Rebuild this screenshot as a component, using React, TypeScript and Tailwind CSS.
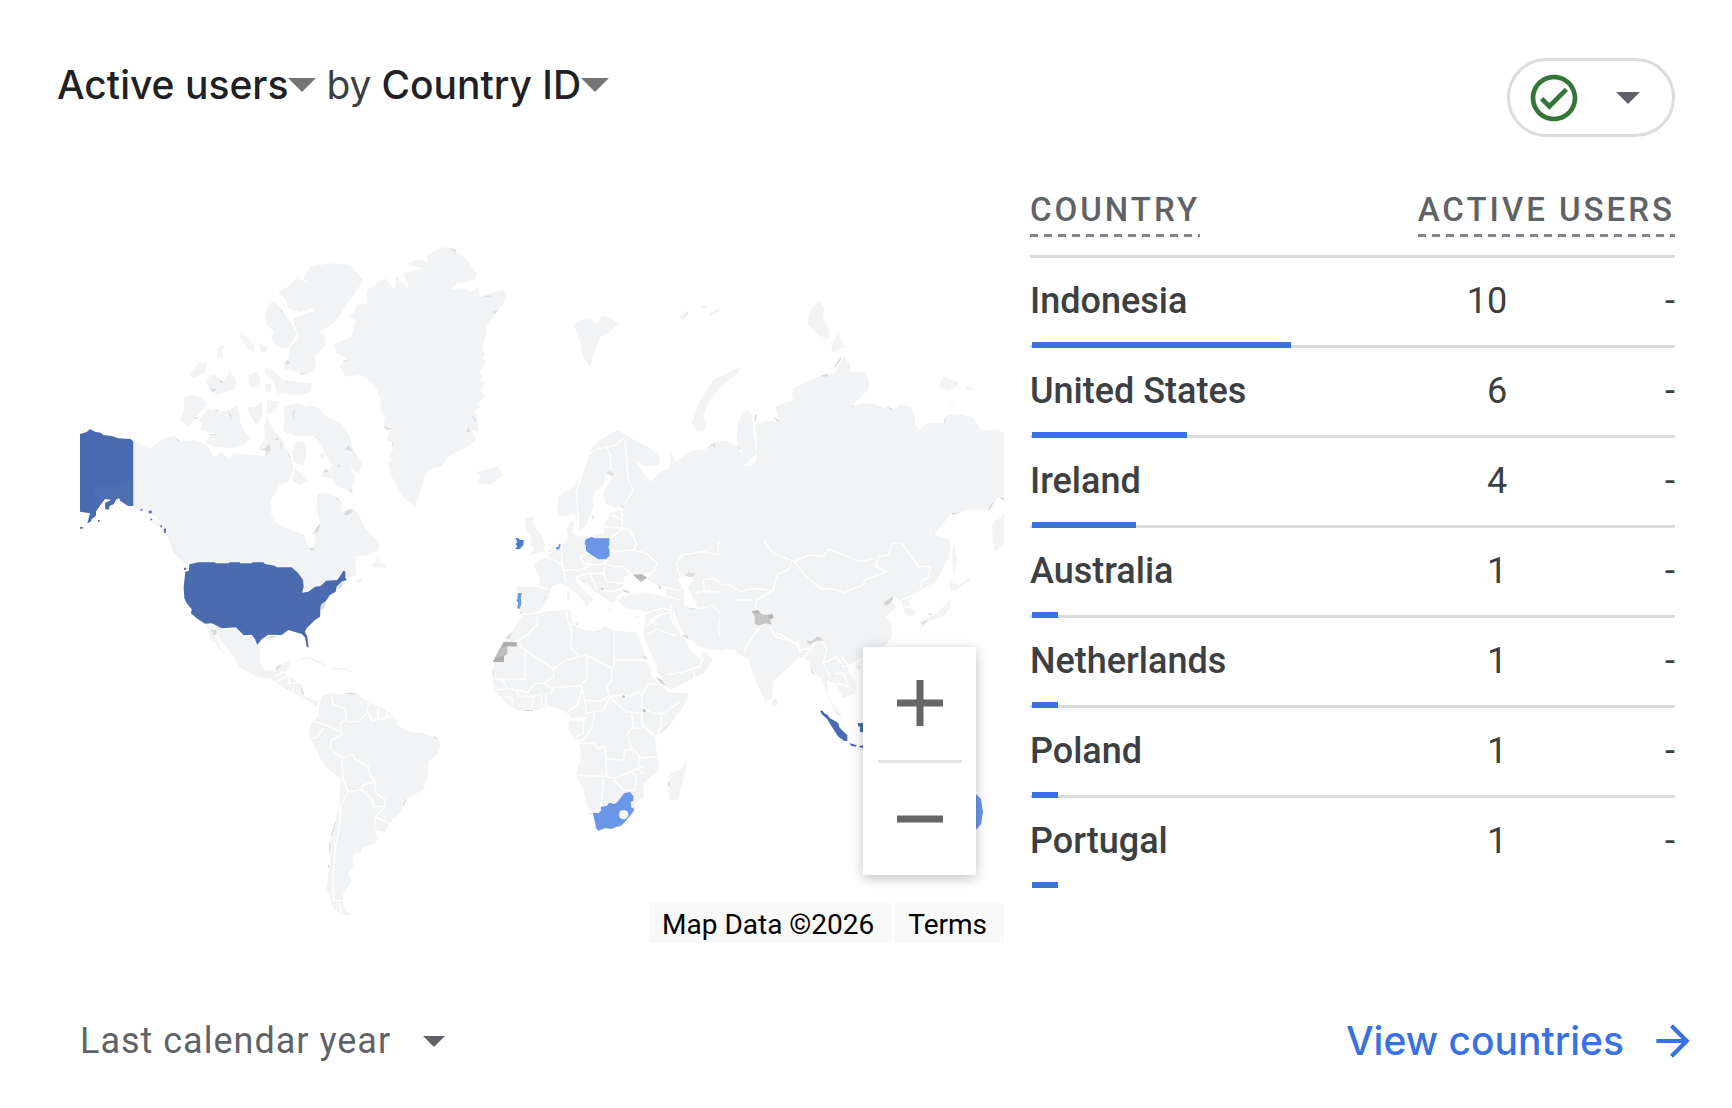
import React from "react";

const rows = [
  { country: "Indonesia", users: 10 },
  { country: "United States", users: 6 },
  { country: "Ireland", users: 4 },
  { country: "Australia", users: 1 },
  { country: "Netherlands", users: 1 },
  { country: "Poland", users: 1 },
  { country: "Portugal", users: 1 },
];

function Caret({ className }: { className: string }) {
  return (
    <svg viewBox="0 0 20 10" className={className} aria-hidden="true">
      <path d="M0 0H20L10 10Z" fill="currentColor" />
    </svg>
  );
}

const land = "#f1f3f4";

function WorldMap() {
  return (
    <svg viewBox="80 187 924 756" className="block w-full" role="img" aria-label="Active users by country">
      {/* North America */}
      <g transform="translate(70 230) scale(.33333)" fill={land}>
        <path d="M1072 75L1100 60 1125 50 1160 65 1190 90 1220 130 1215 150 1160 160 1142 178 1175 175 1210 185 1225 168 1230 202 1250 195 1275 185 1300 180 1313 198 1300 220 1285 240 1258 272 1272 262 1250 290 1245 330 1235 360 1248 375 1238 385 1248 395 1230 425 1240 440 1230 450 1245 460 1230 480 1245 500 1215 525 1232 530 1215 545 1222 560 1225 605 1205 600 1218 630 1185 655 1150 670 1130 685 1115 710 1085 715 1065 730 1055 770 1045 800 1038 830 1020 815 1005 808 985 775 965 740 955 700 965 685 955 680 968 660 975 635 950 632 955 610 970 600 940 585 945 560 932 540 935 525 925 490 910 460 870 435 825 440 808 405 840 390 800 370 790 345 845 320 855 270 840 262 862 225 890 222 890 180 945 145 975 178 978 140 1018 178 1000 130 1065 115 1010 105 1030 92 1060 90 1072 100Z" />
        <path d="M720 110L780 100 840 105 882 152 860 180 840 210 810 255 790 280 750 305 768 320 765 345 735 380 738 410 715 432 640 415 655 385 660 350 690 320 680 300 668 265 730 243 732 233 690 247 655 235 645 205 625 185 650 172 680 145 718 160 700 145Z" />
        <path d="M610 212L632 235 660 275 680 310 665 335 650 355 620 350 605 325 612 305 590 285 585 255 595 225ZM505 310L530 320 550 345 555 370 530 355ZM565 340L590 350 588 370 575 365ZM413 395L405 425 375 445 358 435 385 400ZM405 450L430 432 460 455 480 422 498 450 495 475 445 495 420 482ZM535 435L560 425 570 440 568 475 540 470ZM585 410L620 430 640 450 680 455 725 460 720 490 680 495 620 488 612 450 585 430ZM585 462L605 462 602 488 588 482ZM445 352L465 345 455 360 460 380 440 385Z" />
        <path d="M340 500L370 495 395 505 413 525 380 560 355 590 332 570 342 535ZM415 538L450 545 478 540 500 525 510 570 520 600 540 625 520 645 480 655 430 650 405 635 430 610 390 600 398 585 385 570ZM530 530L555 530 575 515 578 560 560 585 545 565ZM590 510L628 515 615 545 592 550Z" />
        <path d="M640 530L680 520 710 530 720 525 745 535 770 560 810 580 840 620 850 660 880 700 865 730 840 710 855 740 845 790 800 765 790 745 750 740 790 705 770 680 750 640 735 615 690 620 640 605 645 560ZM675 635L705 635 710 680 700 705 675 700 665 670ZM675 715L715 755 690 765 665 750ZM752 668L765 672 760 688 750 682Z" />
        <path d="M192 635L215 640 240 655 280 625 310 618 330 635 375 630 410 645 430 680 455 670 480 690 490 670 550 675 585 680 590 655 565 655 585 625 583 585 592 560 610 600 635 625 650 660 665 690 670 720 655 755 630 765 600 815 605 860 620 880 660 900 705 915 710 940 725 965 735 940 733 905 750 880 740 840 742 790 780 790 815 815 815 845 850 835 870 860 885 895 930 940 925 960 900 975 858 978 855 1000 860 1035 828 1048 822 1022 800 1050 768 1052 735 1070 697 1090 700 1050 665 1015 620 1008 580 1000 358 1000 345 1000 310 970 300 930 285 910 260 860 240 850 192 828Z" />
        <path d="M905 1010L925 980 930 1000 950 1000 950 1015ZM850 1058L882 1040 870 1056Z" />
        <path d="M1213 715L1225 725 1250 718 1285 710 1300 735 1260 765 1225 760 1230 738Z" />
        <path fill="#4a6baf" d="M30 612L50 606 60 597 75 605 92 608 100 615 125 618 145 625 182 627 190 635 190 828 172 827 150 812 147 805 140 808 132 822 118 828 118 838 106 838 106 818 124 810 105 808 92 825 78 845 78 857 65 868 62 875 52 880 60 850 30 845ZM236 842h9v8h-9ZM281 896h7v12h-7ZM211 837h6v6h-6ZM84 870h5v5h-5ZM30 891h8v5h-8ZM241 866h5v5h-5ZM270 886h6v6h-6Z" />
        <path fill="#4d6eb1" d="M72 768L100 764 138 772 142 758 160 765 175 750 189 755 189 827 172 826 150 811 147 805 140 807 105 807 85 830 75 800Z" />
        <path fill="#fff" d="M78 845L92 825 105 808 124 810 106 818 106 838 118 838 118 828 132 822 140 808 147 805 150 812 172 827 172 850 78 850Z" />
        <path fill="#4a6baf" d="M106 818L124 810 132 822 118 828 118 838 106 838Z" />
        <path fill="none" stroke="#dfe2e4" strokeWidth="2" d="M192 829l25 14 20 18 25 15 22 30M240 870l25 15M300 935l20 32 25 20" />
        <path fill="#dadcdd" d="M650 388L660 400 645 405ZM688 429L710 430 695 434ZM420 478L442 477 428 486ZM474 545L484 555 484 574ZM310 616L330 632 324 634ZM598 640L602 660 586 682 588 662 564 657 585 655ZM615 630L622 620 628 630ZM652 662L663 682 658 682ZM632 640h4v20h-4ZM835 645L848 664 826 660ZM758 728L770 715 774 726ZM822 852L832 840 850 837 845 848 830 857ZM728 913L745 885 752 882 745 905ZM715 955L728 953 735 957 725 964ZM940 588L968 598 950 601ZM967 635L972 640 967 656ZM1130 52L1158 60 1158 67ZM1240 200L1260 195 1266 199 1246 202ZM1268 245L1288 240 1275 251ZM1188 608L1196 590 1200 605ZM1202 553L1220 572 1215 575ZM815 394L840 387 838 391 822 397ZM627 232L640 246 636 248ZM834 776L848 782 846 790ZM670 540L674 535 672 568 667 552ZM802 704h8v6h-8ZM375 565L388 558 380 568ZM417 613h22v3h-22ZM446 447L460 457 455 460ZM733 612L742 628 737 624ZM430 539L452 542 440 544ZM796 800L808 808 803 811Z" />
      </g>
      {/* United States, Mexico, Central America and the Caribbean */}
      <g transform="translate(70 400) scale(.33333)" fill={land}>
        <path d="M408 674L425 674 455 687 497 685 522 706 545 706 555 720 563 737 572 740 568 780 580 810 612 812 625 795 660 785 655 810 640 820 690 850 697 855 703 888 745 905 740 920 715 902 690 888 640 860 600 835 565 832 505 800 495 775 470 745 440 700 430 700 465 765 440 735 420 715Z" />
        <path fill="none" stroke={land} strokeWidth="5" d="M680 780L715 772 745 785 765 797M785 805L820 808 845 814" />
        <path fill="none" stroke="#fff" strokeWidth="4" d="M615 830L640 815M645 850L690 848M620 845L655 825 660 860M672 855L668 875" />
        <path fill="#4a6baf" d="M358 493L385 487 432 487 440 490 475 490 480 487 508 487 512 490 545 490 548 487 580 487 585 492 615 497 620 502 665 502 685 520 699 540 701 560 696 578 715 575 735 560 752 558 768 542 802 540 812 525 820 512 826 514 826 532 830 540 815 545 800 560 797 575 780 585 770 600 765 605 752 618 750 650 735 660 710 685 705 695 712 710 716 743 710 740 705 712 695 702 655 690 635 705 595 704 575 718 562 735 555 718 545 704 522 706 497 682 455 685 425 670 405 671 380 655 363 640 365 628 350 610 343 595 341 560 346 515 357 512ZM342 503h7v6h-7Z" />
        <path fill="#d9d9d9" d="M800 572L808 555 824 545 815 560ZM752 630L754 612 770 602 762 625ZM590 713L605 707 622 709 600 716ZM422 690L438 690 440 705 430 705ZM615 808L628 796 634 796 622 810ZM694 865L704 885 696 882ZM640 858L655 865 652 868Z" />
      </g>
      {/* South America */}
      <g transform="translate(290 680) scale(.33333)">
        <path fill={land} d="M100 45L130 38 150 42 200 42 240 70 290 90 320 120 320 135 360 155 400 160 440 175 453 195 440 225 415 245 413 290 400 330 350 355 335 395 300 425 285 455 255 450 262 475 255 492 215 500 213 520 190 522 190 560 175 580 185 605 160 640 158 665 165 690 185 705 155 705 130 685 120 650 108 625 115 580 120 540 118 490 135 430 148 370 152 295 110 265 90 235 75 200 55 170 62 130 85 110 90 70Z" />
        <path fill="none" stroke="#fff" strokeWidth="5" strokeLinejoin="round" d="M125 50L130 75 165 85 170 120 150 130 155 165 125 180 120 200 135 220 160 235 190 222 195 238 235 260 240 285 255 305 220 315 215 330 175 335 160 300 155 240M70 125L100 132 130 145 150 155M100 145L80 172 60 175M170 125L205 125 230 100 235 70M235 95L245 122 305 110M265 85L262 115M290 88L290 112M255 305L255 335 285 360 285 380 250 380 250 360 215 330M285 380L257 410 252 450M257 410L295 430M175 335L150 380 150 430 137 500 130 580 130 662 158 662M148 670L155 705" />
        <path fill="none" stroke="#d6d6d6" strokeWidth="3" d="M165 41h32M430 170l12 6M340 378l8 -20M136 428l-12 40M119 490v25M116 555v8" />
      </g>
      {/* Europe and western Asia */}
      <g transform="translate(480 400) scale(.33333)">
        <path fill={land} d="M232 345L235 290 285 255 305 220 320 180 340 135 360 120 385 105 415 90 450 112 510 145 540 170 538 195 500 200 468 185 490 215 510 245 545 215 570 205 572 155 585 185 640 150 680 150 710 125 740 122 765 135 790 165 770 120 775 60 800 28 815 45 820 100 830 160 800 190 790 195 815 200 835 170 828 80 850 65 900 60 900 780 800 775 760 750 690 750 650 735 625 715 600 700 585 740 585 780 520 780 490 705 495 670 500 640 490 632 440 625 415 605 425 590 450 585 500 580 560 590 560 570 540 560 515 547 500 535 530 510 505 520 480 530 455 520 435 530 428 550 430 575 405 590 410 600 395 610 370 590 345 575 305 540 285 530 290 545 320 580 345 600 330 605 320 620 300 590 265 560 245 550 215 560 205 590 185 630 150 640 125 635 110 625 108 590 110 560 175 560 180 530 160 495 175 480 205 465 240 440 265 415 260 385 275 360 285 375 275 400 300 410 340 405 370 400 375 370 390 340 440 325 400 322 375 310 370 280 385 250 400 225 375 225 370 255 340 280 340 320 320 375 295 395 285 340 250 350ZM135 355L160 350 160 375 180 400 195 435 190 455 145 468 165 445 150 435 155 410 140 395ZM262 575L270 575 268 600 260 600ZM375 625L395 628 390 633ZM465 645L480 650 468 655Z" />
        <path fill="#fff" d="M593 538L615 522 645 535 625 560 637 590 655 625 640 628 612 615 612 570Z" />
        <path fill="none" stroke="#fff" strokeWidth="5" strokeLinejoin="round" d="M295 385L290 270 310 210 325 165 350 148 380 140 400 140 430 118M380 140L390 165 395 210M435 120L445 240 460 270 435 310M395 345L425 360M425 325L428 385M372 380L430 385M390 415L430 385 450 390 470 430 460 450 390 455 375 490 400 500 430 500 450 520M460 450L500 460 530 490 520 515M245 425L245 480 250 510M300 470L330 460M300 470L310 490 355 495 375 490M250 510L300 510 340 490M175 560L205 568M195 468L250 495M250 510L258 548M290 530L330 520 370 520 380 545 430 550M330 520L350 565M365 570L400 575 430 565M375 500L370 520M545 625L575 630 570 610M500 640L545 625M540 560L600 572M560 590L600 600M580 630L585 660 610 700M650 625L700 618 722 640 715 680 720 710 740 750M720 650L760 625 820 630M715 700L770 705 800 650M600 532L590 490 605 465 670 455 715 465 715 430 750 412 790 398 830 410 860 440 900 465M672 575L670 540 700 535 750 565 790 590 830 580M672 575L720 575 770 622M645 580L690 570M770 600L830 610 850 580 900 540M500 680L545 640M520 670L590 710M130 590V620" />
        <path fill="#4b7bd1" d="M106 415L116 415 120 420 131 420 130 435 118 448 106 447 112 438 106 432 112 427Z" />
        <path fill="#6b96e8" d="M317 418L335 411 345 415 388 415 388 435 385 440 389 452 388 468 378 478 355 478 335 465 318 452 318 438 314 432ZM228 442L236 440 236 431 242 432 240 445 234 449 228 446ZM113 580L126 580 122 592 124 612 118 627 112 624 115 608 109 602 113 595Z" />
        <path fill="#b9b9b9" d="M458 524L485 523 502 533 482 545Z" />
        <path fill="#c6c6c6" d="M815 635L832 632 845 645 862 648 878 645 880 655 870 660 875 674 855 670 840 676 824 672Z" />
        <path fill="#dcdcdc" d="M380 220L388 213 402 222 398 228ZM612 528L625 517 645 520 638 532ZM428 566L450 575 450 580 432 576ZM533 556L547 562 540 570ZM672 150L700 130 708 128 704 143 698 137ZM768 130L782 148 776 148ZM668 45L677 82 670 75ZM824 42L832 45 824 68ZM605 705L622 705 626 718ZM95 697L80 718 82 708ZM195 590L200 588 188 606ZM296 535L316 546 312 549ZM422 316L434 320 428 324ZM338 345L342 348 335 362ZM205 455L225 438 210 455ZM115 633L130 638 125 642ZM880 50L898 62 890 63Z" />
        <circle cx="367" cy="567" r="4" fill="#d3d3d3" />
      </g>
      {/* Svalbard and Franz Josef Land */}
      <path fill={land} d="M574 325L582 320 590 318 596 325 602 316 612 318 618 324 610 332 600 337 595 350 590 368 583 356 580 342ZM680 316L688 310 684 320ZM700 306L708 306 704 309ZM712 312L720 308 719 312 708 317Z" />
      {/* Northern and eastern Russia */}
      <g transform="translate(680 270) scale(.33333)">
        <path fill={land} d="M228 460L245 470 300 460 285 410 340 390 335 375 340 355 380 335 420 318 465 310 490 262 510 280 512 305 555 305 568 330 565 360 510 412 545 398 580 402 640 420 660 405 695 410 705 440 705 460 718 480 740 460 790 460 800 435 850 432 880 445 905 482 950 478 972 490 972 690 955 680 930 720 880 718 815 730 790 760 760 795 785 810 800 810 808 870 240 870ZM180 290L175 310 120 350 85 400 70 440 78 480 50 482 35 460 60 390 100 330ZM418 92L432 115 428 150 450 180 445 210 415 195 382 160 392 120ZM475 188L495 230 452 248 460 215ZM780 335L790 320 835 335 830 350 800 362 778 350ZM855 345L885 355 865 362ZM972 730L972 820 945 845 935 770ZM812 400L826 408 815 410Z" />
        <path fill="#dadada" d="M462 290L482 262 484 266 465 293ZM425 315L445 312 444 319 426 320ZM614 408L638 416 636 423ZM815 730L848 725 818 735ZM925 718L936 698 941 697 930 718ZM957 680L972 685 970 692ZM278 440L298 450 296 457ZM510 412L525 403 520 410ZM10 145L25 122 22 134ZM756 795h12l-6 -5ZM793 445h4v16h-4Z" />
      </g>
      {/* Africa and Arabia */}
      <g transform="translate(470 600) scale(.33333)">
        <path fill={land} d="M160 45L200 42 235 33 300 30 305 60 310 75 345 90 385 95 400 78 435 90 500 98 505 115 520 150 540 200 545 225 570 255 595 275 625 280 658 278 640 320 600 375 555 410 560 450 568 490 560 515 520 550 522 590 495 610 493 630 460 675 420 687 385 692 368 640 350 620 340 570 318 525 335 465 325 425 295 390 298 345 280 333 260 325 235 318 190 333 145 333 105 305 75 270 68 240 72 185 100 128 130 90 145 60ZM645 488L650 500 640 540 625 598 600 600 592 560 600 520 630 510ZM525 95L540 80 580 70 620 100 640 110 660 150 690 175 705 155 730 180 700 220 640 250 600 268 590 262 570 215 545 160 525 115Z" />
        <path fill="none" stroke="#fff" strokeWidth="5" strokeLinejoin="round" d="M200 50L203 72 165 108 140 125 165 150 250 207 290 180 330 170M165 150L165 238 80 238M290 35L292 60 305 90 303 145 330 170 350 165M292 65L308 75M433 88L433 195M433 180L530 180M355 168L425 205 433 195M425 205L425 240 410 260 420 290M250 207L252 230 220 250 195 250 175 275M242 285L250 262 330 258 350 235 350 170M335 260L345 300 390 305 420 285M345 300L348 340M335 270L325 310 295 335M345 340L400 330 420 290 440 310 470 335 515 340M420 290L450 285 480 290 505 275 515 285 515 320 545 340 580 340 630 305M515 285L535 250 570 255M575 342L572 385 560 408M515 335L515 375 555 408M480 385L515 385M485 345L490 380 470 405M375 340L365 385 345 415 325 425M325 430L370 430 385 445 405 440 408 475 460 480 465 450 485 450 475 410M485 445L515 475 560 470M408 475L410 530 318 525M410 530L435 535 480 515 520 500M508 470L505 500 515 520 525 515M400 535L398 570 393 620M435 540L460 570 495 570 500 530 480 515M300 360L340 360 340 400 318 410M298 355L352 355M75 235L100 240 110 265 140 270 147 290M80 270L110 265M105 290L125 290 130 315M147 290L190 290 185 325M145 270L175 278M190 290L215 280 215 320M228 278L228 318M220 250L245 265M540 65L555 50 605 35M600 30L610 70 635 100M530 105L560 88 620 108M590 225L640 215 690 200 700 170M670 210L675 235" />
        <path fill="#bdbdbd" d="M100 127H140V139H112V163L102 168V186H69L85 152Z" />
        <path fill="#adadad" d="M100 127H140V139H112L96 143ZM76 172L102 168V186H69Z" />
        <path fill="#d6d6d6" d="M104 118L128 96 118 114ZM517 175L525 169 533 178ZM557 232L575 238 590 258 572 250ZM556 202L576 225 570 222ZM560 408L602 366 590 382ZM165 330h25v3h-25ZM637 104L652 108 656 117ZM652 26L680 25 668 29ZM594 545h5v12h-5ZM316 70L326 71 320 75ZM374 90L386 94 384 97ZM68 212h3v18h-3ZM355 635L366 645 358 643Z" />
        <circle cx="461" cy="290" r="4" fill="#bbb" />
        <circle cx="523" cy="332" r="4" fill="#bbb" />
        <path fill="#6b96e8" d="M368 640L376 638 385 640 393 632 393 620 410 618 418 608 432 612 440 608 450 596 462 580 480 576 490 588 490 602 482 606 484 622 494 628 480 648 465 665 452 678 440 680 425 687 405 684 385 692 378 685 374 662Z" />
        <ellipse cx="461" cy="644" rx="14" ry="14" fill="#f6f7f7" />
      </g>
      {/* South and East Asia */}
      <g transform="translate(720 520) scale(.33333)">
        <path fill={land} d="M0 385L40 385 85 415 95 450 115 500 135 545 155 535 162 480 215 435 235 410 265 420 275 460 300 470 312 490 318 515 330 540 345 580 365 600 360 575 335 545 322 520 320 480 345 490 370 535 405 520 410 490 385 455 385 435 430 410 480 400 515 350 515 310 495 290 530 262 515 245 520 228 545 245 555 280 575 292 585 280 565 245 600 210 650 185 690 100 690 60 640 45 660 -20 0 -20ZM690 185L715 195 750 178 712 210 690 212ZM685 232L692 262 670 290 630 300 602 325 600 305 650 280 680 250ZM700 70L712 115 702 165 696 110ZM852 0L852 60 825 95 818 40 825 0ZM412 430L424 440 415 450 408 440Z" />
        <ellipse cx="165" cy="548" rx="8" ry="11" fill={land} />
        <path fill="none" stroke="#fff" strokeWidth="5" strokeLinejoin="round" d="M130 60L160 100 222 125 265 105 310 110 325 88 380 108 420 125 465 115M222 125L255 165 300 205 345 208 375 217 430 195 435 180 500 155 468 140 475 110 505 105 515 70 545 68 575 110 595 140 630 140 625 175 605 180 603 205M215 128L205 150 170 165 160 210 110 240 105 270M0 195L30 195 60 215 100 205 155 212M50 240L95 240M125 315L80 375 75 400M150 320L165 350 235 370 240 400M160 345L180 342 235 375M230 372L240 390 270 385 250 418M300 360L320 385 310 430 330 470M310 430L350 410 370 440 400 435M340 460L372 460 385 500 350 490M365 410L395 450M285 365L270 400M545 240L585 225M555 262L580 260" />
        <path fill="#c6c6c6" d="M95 275L112 270 125 282 142 285 158 282 160 293 150 298 155 314 135 310 120 317 104 312 105 290Z" />
        <path fill="#b2b2b2" d="M142 285L158 282 160 293 150 298ZM95 275L112 270 122 280 108 280Z" />
        <path fill="#d2d2d2" d="M258 362L275 363 290 351 303 352 309 362 290 362 268 374ZM490 250L520 228 518 240 500 258ZM272 445L284 466 276 460ZM738 182L752 174 744 182ZM606 308L622 300 610 315ZM625 282L642 280 630 286Z" />
        <path fill="#4a6baf" d="M300 572H308L313 580 322 584 330 595 345 603 355 610 358 622 368 632 378 642 382 645V663H373L355 650 345 635 332 615 322 598 305 582ZM414 608L422 610 432 608V637L420 636 420 620 414 618ZM388 669L398 672 410 676 408 680 394 678ZM417 678L432 676V683H422Z" />
      </g>
      {/* Western Australia */}
      <path fill="#6b96e8" d="M960 790L976 794 981 799 983 812 981 824 976 830 960 835Z" />
    </svg>
  );
}

export default function App() {
  return (
    <main className="bg-white pt-[58px] font-[Roboto,sans-serif] text-[#3c4043]">
      <header className="flex items-start justify-between pr-[57px] pl-[57px]">
        <h1 className="flex items-center pt-[3px] font-[Inter,sans-serif] text-[39px] leading-[48px] font-medium text-[#202124]">
          <button type="button" aria-haspopup="menu" className="flex items-center">
            Active users
            <Caret className="h-[14px] w-7 text-[#757575]" />
          </button>
          <span className="px-[10px] font-normal text-[#3c4043]">by</span>
          <button type="button" aria-haspopup="menu" className="flex items-center">
            Country ID
            <Caret className="h-[14px] w-7 text-[#757575]" />
          </button>
        </h1>
        <button
          type="button"
          aria-label="Data quality"
          aria-haspopup="menu"
          className="flex h-[79px] w-[168px] items-center justify-between rounded-full border-[3px] border-[#dadce0] pr-8 pl-4"
        >
          <svg viewBox="0 0 24 24" className="size-14 text-[#34753a]" aria-hidden="true">
            <path
              fill="currentColor"
              d="M12 2C6.48 2 2 6.48 2 12s4.48 10 10 10 10-4.48 10-10S17.52 2 12 2zm0 18c-4.41 0-8-3.59-8-8s3.59-8 8-8 8 3.59 8 8-3.59 8-8 8zm4.59-12.42L10 14.17l-2.59-2.58L6 13l4 4 8-8z"
            />
          </svg>
          <Caret className="h-3 w-6 text-[#5f6368]" />
        </button>
      </header>

      <div className="mt-[50px] mr-[57px] ml-20 grid grid-cols-[924fr_645fr] items-start gap-[26px]">
        <section aria-label="Map" className="relative">
          <WorldMap />
          <div className="absolute right-7 bottom-[68px] flex h-[228px] w-[113px] flex-col items-center bg-white shadow-[0_3px_12px_rgba(0,0,0,0.25)]">
            <button type="button" aria-label="Zoom in" className="flex w-full flex-1 items-center justify-center">
              <svg viewBox="0 0 46 46" className="size-[46px]" aria-hidden="true">
                <path d="M23 0V46M0 23H46" stroke="#666" strokeWidth="7" />
              </svg>
            </button>
            <div className="h-[3px] w-[84px] bg-[#e6e6e6]" />
            <button type="button" aria-label="Zoom out" className="flex w-full flex-1 items-center justify-center">
              <svg viewBox="0 0 46 46" className="size-[46px]" aria-hidden="true">
                <path d="M0 23H46" stroke="#666" strokeWidth="7" />
              </svg>
            </button>
          </div>
          <div className="absolute right-0 bottom-0 flex gap-[3px] text-[28px] leading-[36px] text-black">
            <span className="bg-[#f9f9f9] pt-1 pr-[17px] pl-[13px]">Map Data ©2026</span>
            <a href="#terms" className="bg-[#f9f9f9] pt-1 pr-[17px] pl-[14px]">
              Terms
            </a>
          </div>
        </section>

        <table className="w-full table-fixed border-separate border-spacing-0">
          <colgroup>
            <col className="w-[55%]" />
            <col className="w-[19%]" />
            <col className="w-[26%]" />
          </colgroup>
          <thead>
            <tr className="h-[71px] align-top text-[33px] leading-[46px] text-[#5f6368]">
              <th scope="col" className="border-b-[3px] border-[#dadce0] p-0 text-left font-medium">
                <span className="inline-block bg-[repeating-linear-gradient(90deg,#80868b_0_8px,transparent_8px_14px)] bg-[length:100%_3px] bg-bottom bg-no-repeat pb-1 tracking-[3px]">
                  COUNTRY
                </span>
              </th>
              <th scope="col" colSpan={2} className="border-b-[3px] border-[#dadce0] p-0 text-right font-medium">
                <span className="inline-block bg-[repeating-linear-gradient(90deg,#80868b_0_8px,transparent_8px_14px)] bg-[length:100%_3px] bg-bottom bg-no-repeat pb-1 tracking-[3px]">
                  ACTIVE USERS
                </span>
              </th>
            </tr>
          </thead>
          <tbody className="text-[36px] leading-[42px]">
            {rows.map((row) => (
              <tr key={row.country} className="group h-[90px]">
                <th
                  scope="row"
                  className="relative border-b-[3px] border-[#dadce0] p-0 pb-[2px] text-left font-medium group-last:border-transparent"
                >
                  {row.country}
                  <div
                    className="absolute -bottom-[3px] left-[2px] h-[6px] bg-[#3871e0]"
                    style={{ width: `${row.users * 7.3}%` }}
                  />
                </th>
                <td className="border-b-[3px] border-[#dadce0] p-0 pb-[2px] text-right group-last:border-transparent">
                  {row.users}
                </td>
                <td className="border-b-[3px] border-[#dadce0] p-0 pb-[2px] text-right group-last:border-transparent">-</td>
              </tr>
            ))}
          </tbody>
        </table>
      </div>

      <footer className="mt-[70px] flex items-center justify-between pr-[34px] pb-8 pl-20">
        <button type="button" aria-haspopup="menu" className="flex items-center gap-8 text-[36px] leading-[56px] text-[#5f6368]">
          <span className="tracking-[1px]">Last calendar year</span>
          <Caret className="h-[11px] w-[22px]" />
        </button>
        <a
          href="#countries"
          className="flex items-center gap-6 font-[Inter,sans-serif] text-[39px] leading-[56px] font-medium text-[#3871e0]"
        >
          View countries
          <svg viewBox="0 0 24 24" className="size-[50px]" aria-hidden="true">
            <path fill="currentColor" d="M12 4l-1.41 1.41L16.17 11H4v2h12.17l-5.58 5.59L12 20l8-8z" />
          </svg>
        </a>
      </footer>
    </main>
  );
}
